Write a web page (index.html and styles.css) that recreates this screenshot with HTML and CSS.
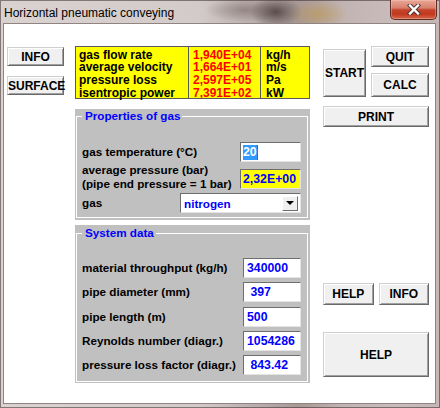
FILE: index.html
```html
<!DOCTYPE html>
<html lang="en">
<head>
    <meta charset="UTF-8">
    <title>Horizontal pneumatic conveying</title>
    <link rel="stylesheet" href="styles.css">
</head>
<body>
    <div class="window">
        <div class="titlebar">
            <span class="title">Horizontal pneumatic conveying</span>
            <button class="close-btn" aria-label="close">
                <svg width="14" height="11" viewBox="0 0 14 11">
                    <path d="M3 1.5 L11 9.5 M11 1.5 L3 9.5" stroke="#4a3434" stroke-width="4.2" stroke-linecap="square"/>
                    <path d="M3 1.5 L11 9.5 M11 1.5 L3 9.5" stroke="#fff" stroke-width="2.4" stroke-linecap="square"/>
                </svg>
            </button>
        </div>

        <div class="client">
            <!-- left buttons -->
            <div class="col-left">
                <button class="btn btn-info">INFO</button>
                <button class="btn btn-surface">SURFACE</button>
            </div>

            <!-- results and input panels -->
            <div class="col-mid">
                <div class="results">
                    <div class="results-col col-names">
                        <span>gas flow rate</span>
                        <span>average velocity</span>
                        <span>pressure loss</span>
                        <span>isentropic power</span>
                    </div>
                    <div class="results-col col-values">
                        <span>1,940E+04</span>
                        <span>1,664E+01</span>
                        <span>2,597E+05</span>
                        <span>7,391E+02</span>
                    </div>
                    <div class="results-col col-units">
                        <span>kg/h</span>
                        <span>m/s</span>
                        <span>Pa</span>
                        <span>kW</span>
                    </div>
                </div>

                <div class="panel panel-gas">
                    <fieldset class="group">
                        <legend>Properties of gas</legend>
                        <div class="field-row">
                            <span class="field-label">gas temperature (°C)</span>
                            <div class="field field-wide"><span class="selected">20</span></div>
                        </div>
                        <div class="field-row row-pressure">
                            <span class="field-label">average pressure (bar)<br>(pipe end pressure = 1 bar)</span>
                            <div class="field field-wide field-yellow">2,32E+00</div>
                        </div>
                        <div class="field-row row-gas">
                            <span class="field-label">gas</span>
                            <div class="field field-select">
                                <span>nitrogen</span>
                                <span class="drop-btn"><span class="drop-arrow"></span></span>
                            </div>
                        </div>
                    </fieldset>
                </div>

                <div class="panel panel-sys">
                    <fieldset class="group group-sys">
                        <legend>System data</legend>
                        <div class="field-row">
                            <span class="field-label">material throughput (kg/h)</span>
                            <div class="field">340000</div>
                        </div>
                        <div class="field-row">
                            <span class="field-label">pipe diameter (mm)</span>
                            <div class="field"> 397</div>
                        </div>
                        <div class="field-row">
                            <span class="field-label">pipe length (m)</span>
                            <div class="field">500</div>
                        </div>
                        <div class="field-row">
                            <span class="field-label">Reynolds number (diagr.)</span>
                            <div class="field">1054286</div>
                        </div>
                        <div class="field-row">
                            <span class="field-label">pressure loss factor (diagr.)</span>
                            <div class="field"> 843.42</div>
                        </div>
                    </fieldset>
                </div>
            </div>

            <!-- right buttons -->
            <div class="col-right">
                <div class="top-buttons">
                    <button class="btn btn-start">START</button>
                    <div class="btn-stack">
                        <button class="btn btn-quit">QUIT</button>
                        <button class="btn btn-calc">CALC</button>
                    </div>
                </div>
                <button class="btn btn-print">PRINT</button>
                <div class="help-row">
                    <button class="btn btn-help">HELP</button>
                    <button class="btn btn-help">INFO</button>
                </div>
                <button class="btn btn-help-big">HELP</button>
            </div>
        </div>
    </div>
</body>
</html>
```

FILE: styles.css
```css
* {
    box-sizing: border-box;
}

body {
    margin: 0;
    font-family: "Liberation Sans", Arial, sans-serif;
}

.window {
    width: 440px;
    height: 408px;
    display: flex;
    flex-direction: column;
    background:
        radial-gradient(ellipse 30px 14px at 318px 14px, rgba(190, 150, 70, 0.55), transparent),
        radial-gradient(ellipse 26px 16px at 276px 12px, rgba(70, 58, 56, 0.8), transparent),
        radial-gradient(ellipse 40px 12px at 245px 10px, rgba(120, 104, 100, 0.6), transparent),
        linear-gradient(to right, #d9d2d1 0%, #d3cbca 45%, #b6aaa8 60%, #a89896 68%, #c2b4b2 78%, #c9bcba 90%, #c4b6b4 100%);
    box-shadow: inset 0 0 0 1px rgba(60, 46, 46, 0.55);
}

.titlebar {
    height: 23px;
    display: flex;
    align-items: flex-start;
}

.title {
    font-size: 12px;
    line-height: 14px;
    padding: 6px 0 0 4px;
    color: #000;
}

.close-btn {
    margin: 0 3px 0 auto;
    width: 47px;
    height: 20px;
    padding: 0;
    display: flex;
    align-items: center;
    justify-content: center;
    border: 1px solid #5e2c25;
    border-top: none;
    border-radius: 0 0 5px 5px;
    background: linear-gradient(to bottom, #e8a897 0%, #d8806c 42%, #c4442c 52%, #c2391f 75%, #d4684a 100%);
    box-shadow: inset 0 0 0 1px rgba(255, 210, 200, 0.35);
}

.client {
    flex: 1;
    margin: 0 4px 4px 3px;
    background: #fff;
    border: 1px solid #8f8482;
    display: flex;
    padding: 22px 0 0 3px;
}

/* buttons */
.btn {
    font-family: "Liberation Sans", Arial, sans-serif;
    font-weight: bold;
    font-size: 12px;
    color: #000;
    background: #f0f0f0;
    border: 1px solid;
    border-color: #cfcfcf #696969 #696969 #cfcfcf;
    box-shadow: inset 1px 1px 0 #fff, inset -1px -1px 0 #a0a0a0;
    padding: 0;
}

.col-left {
    width: 57px;
    display: flex;
    flex-direction: column;
}

.btn-info {
    height: 19px;
    margin-top: 1px;
}

.btn-surface {
    height: 19px;
    margin-top: 10px;
}

.col-mid {
    width: 235px;
    margin-left: 11px;
}

/* yellow results box */
.results {
    display: grid;
    grid-template-columns: 112px 72px 1fr;
    height: 53px;
    background: #ffff00;
    border: 1px solid #5a5a5a;
    font-weight: bold;
    font-size: 12px;
}

.results-col {
    padding-top: 1.5px;
}

.results-col span {
    display: block;
    line-height: 12.7px;
    white-space: nowrap;
}

.col-names {
    padding-left: 3px;
}

.col-values {
    border-left: 1px solid #5a5a5a;
    padding-left: 4px;
    color: #ff0000;
}

.col-units {
    border-left: 1px solid #5a5a5a;
    padding-left: 5px;
}

/* grey panels */
.panel {
    background: #c0c0c0;
    padding: 0 2px 2px 1px;
}

.panel-gas {
    height: 111px;
    margin-top: 10px;
}

.panel-sys {
    height: 158px;
    margin-top: 5px;
    padding-top: 1px;
    padding-bottom: 1px;
}

.group {
    margin: 0;
    height: 100%;
    min-width: 0;
    border: 1px solid #fff;
    padding: 19px 6px 0 5px;
}

.group-sys {
    padding-top: 18px;
}

.group legend {
    font-weight: bold;
    font-size: 11.7px;
    line-height: 14px;
    color: #0000ff;
    padding: 0 2px 0 3px;
}

.field-row {
    display: flex;
    align-items: center;
    justify-content: space-between;
    font-weight: bold;
    font-size: 11.7px;
    color: #000;
}

.group-sys .field-row + .field-row {
    margin-top: 4.25px;
}

.field-label {
    line-height: 14px;
    white-space: nowrap;
}

.row-pressure {
    align-items: flex-start;
    margin-top: 1px;
}

.row-pressure .field {
    margin-top: 6px;
}

.row-gas {
    margin-top: 2px;
}

.field {
    width: 58px;
    height: 20px;
    display: flex;
    align-items: center;
    padding-left: 3px;
    background: #fff;
    border: 1px solid;
    border-color: #6e6e6e #e4e4e4 #e4e4e4 #6e6e6e;
    font-weight: bold;
    font-size: 12.3px;
    color: #0000ff;
    white-space: pre;
}

.field-wide {
    width: 61px;
    padding-left: 2px;
}

.field-yellow {
    background: #ffff00;
}

.selected {
    background: #3399ff;
    color: #fff;
    line-height: 15px;
    border-right: 1px solid #8a5a2a;
}

.field-select {
    width: 121px;
    font-size: 11.7px;
    justify-content: space-between;
    padding-right: 2px;
}

.drop-btn {
    width: 16px;
    height: 15px;
    display: flex;
    align-items: center;
    justify-content: center;
    background: #f0f0f0;
    border: 1px solid;
    border-color: #fff #6e6e6e #6e6e6e #fff;
}

.drop-arrow {
    width: 0;
    height: 0;
    border-left: 4px solid transparent;
    border-right: 4px solid transparent;
    border-top: 4px solid #000;
}

/* right column */
.col-right {
    width: 106px;
    margin-left: 13px;
    display: flex;
    flex-direction: column;
}

.top-buttons {
    display: flex;
    gap: 5px;
}

.btn-start {
    width: 43px;
    height: 48px;
    margin-top: 3px;
}

.btn-stack {
    flex: 1;
    display: flex;
    flex-direction: column;
}

.btn-quit {
    height: 21px;
}

.btn-calc {
    height: 24px;
    margin-top: 6px;
}

.btn-print {
    height: 21px;
    margin-top: 9px;
}

.help-row {
    display: flex;
    gap: 5px;
    margin-top: 156px;
}

.help-row .btn-help {
    flex: 1;
    height: 22px;
}

.btn-help-big {
    height: 45px;
    margin-top: 27px;
}
```
